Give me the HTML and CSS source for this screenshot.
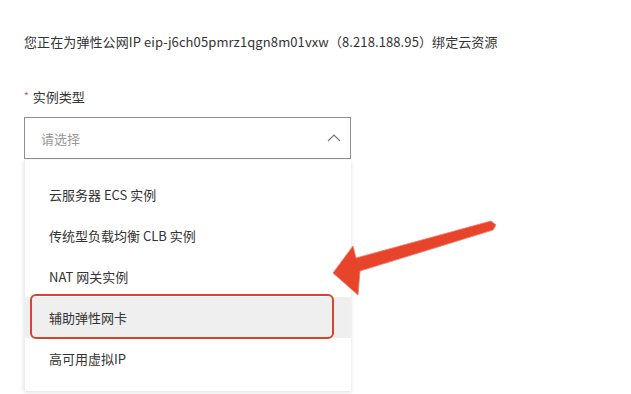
FILE: index.html
```html
<!DOCTYPE html>
<html lang="zh">
<head>
<meta charset="utf-8">
<link rel="stylesheet" href="styles.css">
</head>
<body>
<div class="page">
  <p class="intro">您正在为弹性公网IP eip-j6ch05pmrz1qgn8m01vxw（8.218.188.95）绑定云资源</p>
  <div class="field">
    <div class="label"><span class="req">*</span>实例类型</div>
    <div class="select">
      <span class="placeholder">请选择</span>
      <svg class="chev" width="14" height="8" viewBox="0 0 14 8"><path d="M1 7 L7 1 L13 7" fill="none" stroke="#777" stroke-width="1.2"/></svg>
    </div>
    <ul class="menu">
      <li class="item">云服务器 ECS 实例</li>
      <li class="item">传统型负载均衡 CLB 实例</li>
      <li class="item">NAT 网关实例</li>
      <li class="item active">辅助弹性网卡<span class="mark"></span></li>
      <li class="item">高可用虚拟IP</li>
    </ul>
  </div>
  <svg class="arrow" width="631" height="394" viewBox="0 0 631 394">
    <polygon points="333,273 353,246 356,258 491,221 496,225 493,230 360,271 358,295" fill="#e8442b" stroke="#f07a66" stroke-width="0.8" stroke-linejoin="round"/>
  </svg>
</div>
</body>
</html>
```
FILE: styles.css
```css
* { box-sizing: border-box; }
html, body { margin: 0; padding: 0; background: #fff; }
body {
  font-family: "Noto Sans CJK SC", "Liberation Sans", sans-serif;
  color: #333;
  font-size: 13px;
}
.page {
  position: relative;
  width: 631px;
  height: 394px;
  overflow: hidden;
  padding: 32px 0 0 24px;
}
.intro {
  margin: 0;
  line-height: 20px;
  font-size: 13px;
  color: #333;
  letter-spacing: 0.1px;
}
.field {
  margin-top: 34px;
  width: 327px;
}
.label {
  line-height: 20px;
  font-size: 13px;
  color: #333;
}
.req {
  color: #e8442b;
  margin-right: 4px;
  font-size: 10px;
  vertical-align: 2px;
}
.select {
  margin-top: 10px;
  height: 42px;
  border: 1px solid #8f8f8f;
  display: flex;
  align-items: center;
  justify-content: space-between;
  padding: 0 9px 0 16px;
}
.placeholder {
  color: #999;
  font-size: 13px;
}
.chev { display: block; }
.menu {
  list-style: none;
  margin: 1px 0 0 0;
  padding: 14px 0 12px 0;
  background: #fff;
  box-shadow: 0 1px 4px rgba(0,0,0,0.14);
  border-left: 1px solid #eee;
}
.item {
  position: relative;
  height: 41px;
  line-height: 41px;
  padding-left: 24px;
  font-size: 13px;
  color: #333;
}
.item.active { background: #efefef; }
.mark {
  position: absolute;
  left: 5px;
  top: -3px;
  width: 304px;
  height: 45px;
  border: 2.5px solid #d9442f;
  border-radius: 6px;
}
.arrow {
  position: absolute;
  left: 0;
  top: 0;
  pointer-events: none;
}
```
